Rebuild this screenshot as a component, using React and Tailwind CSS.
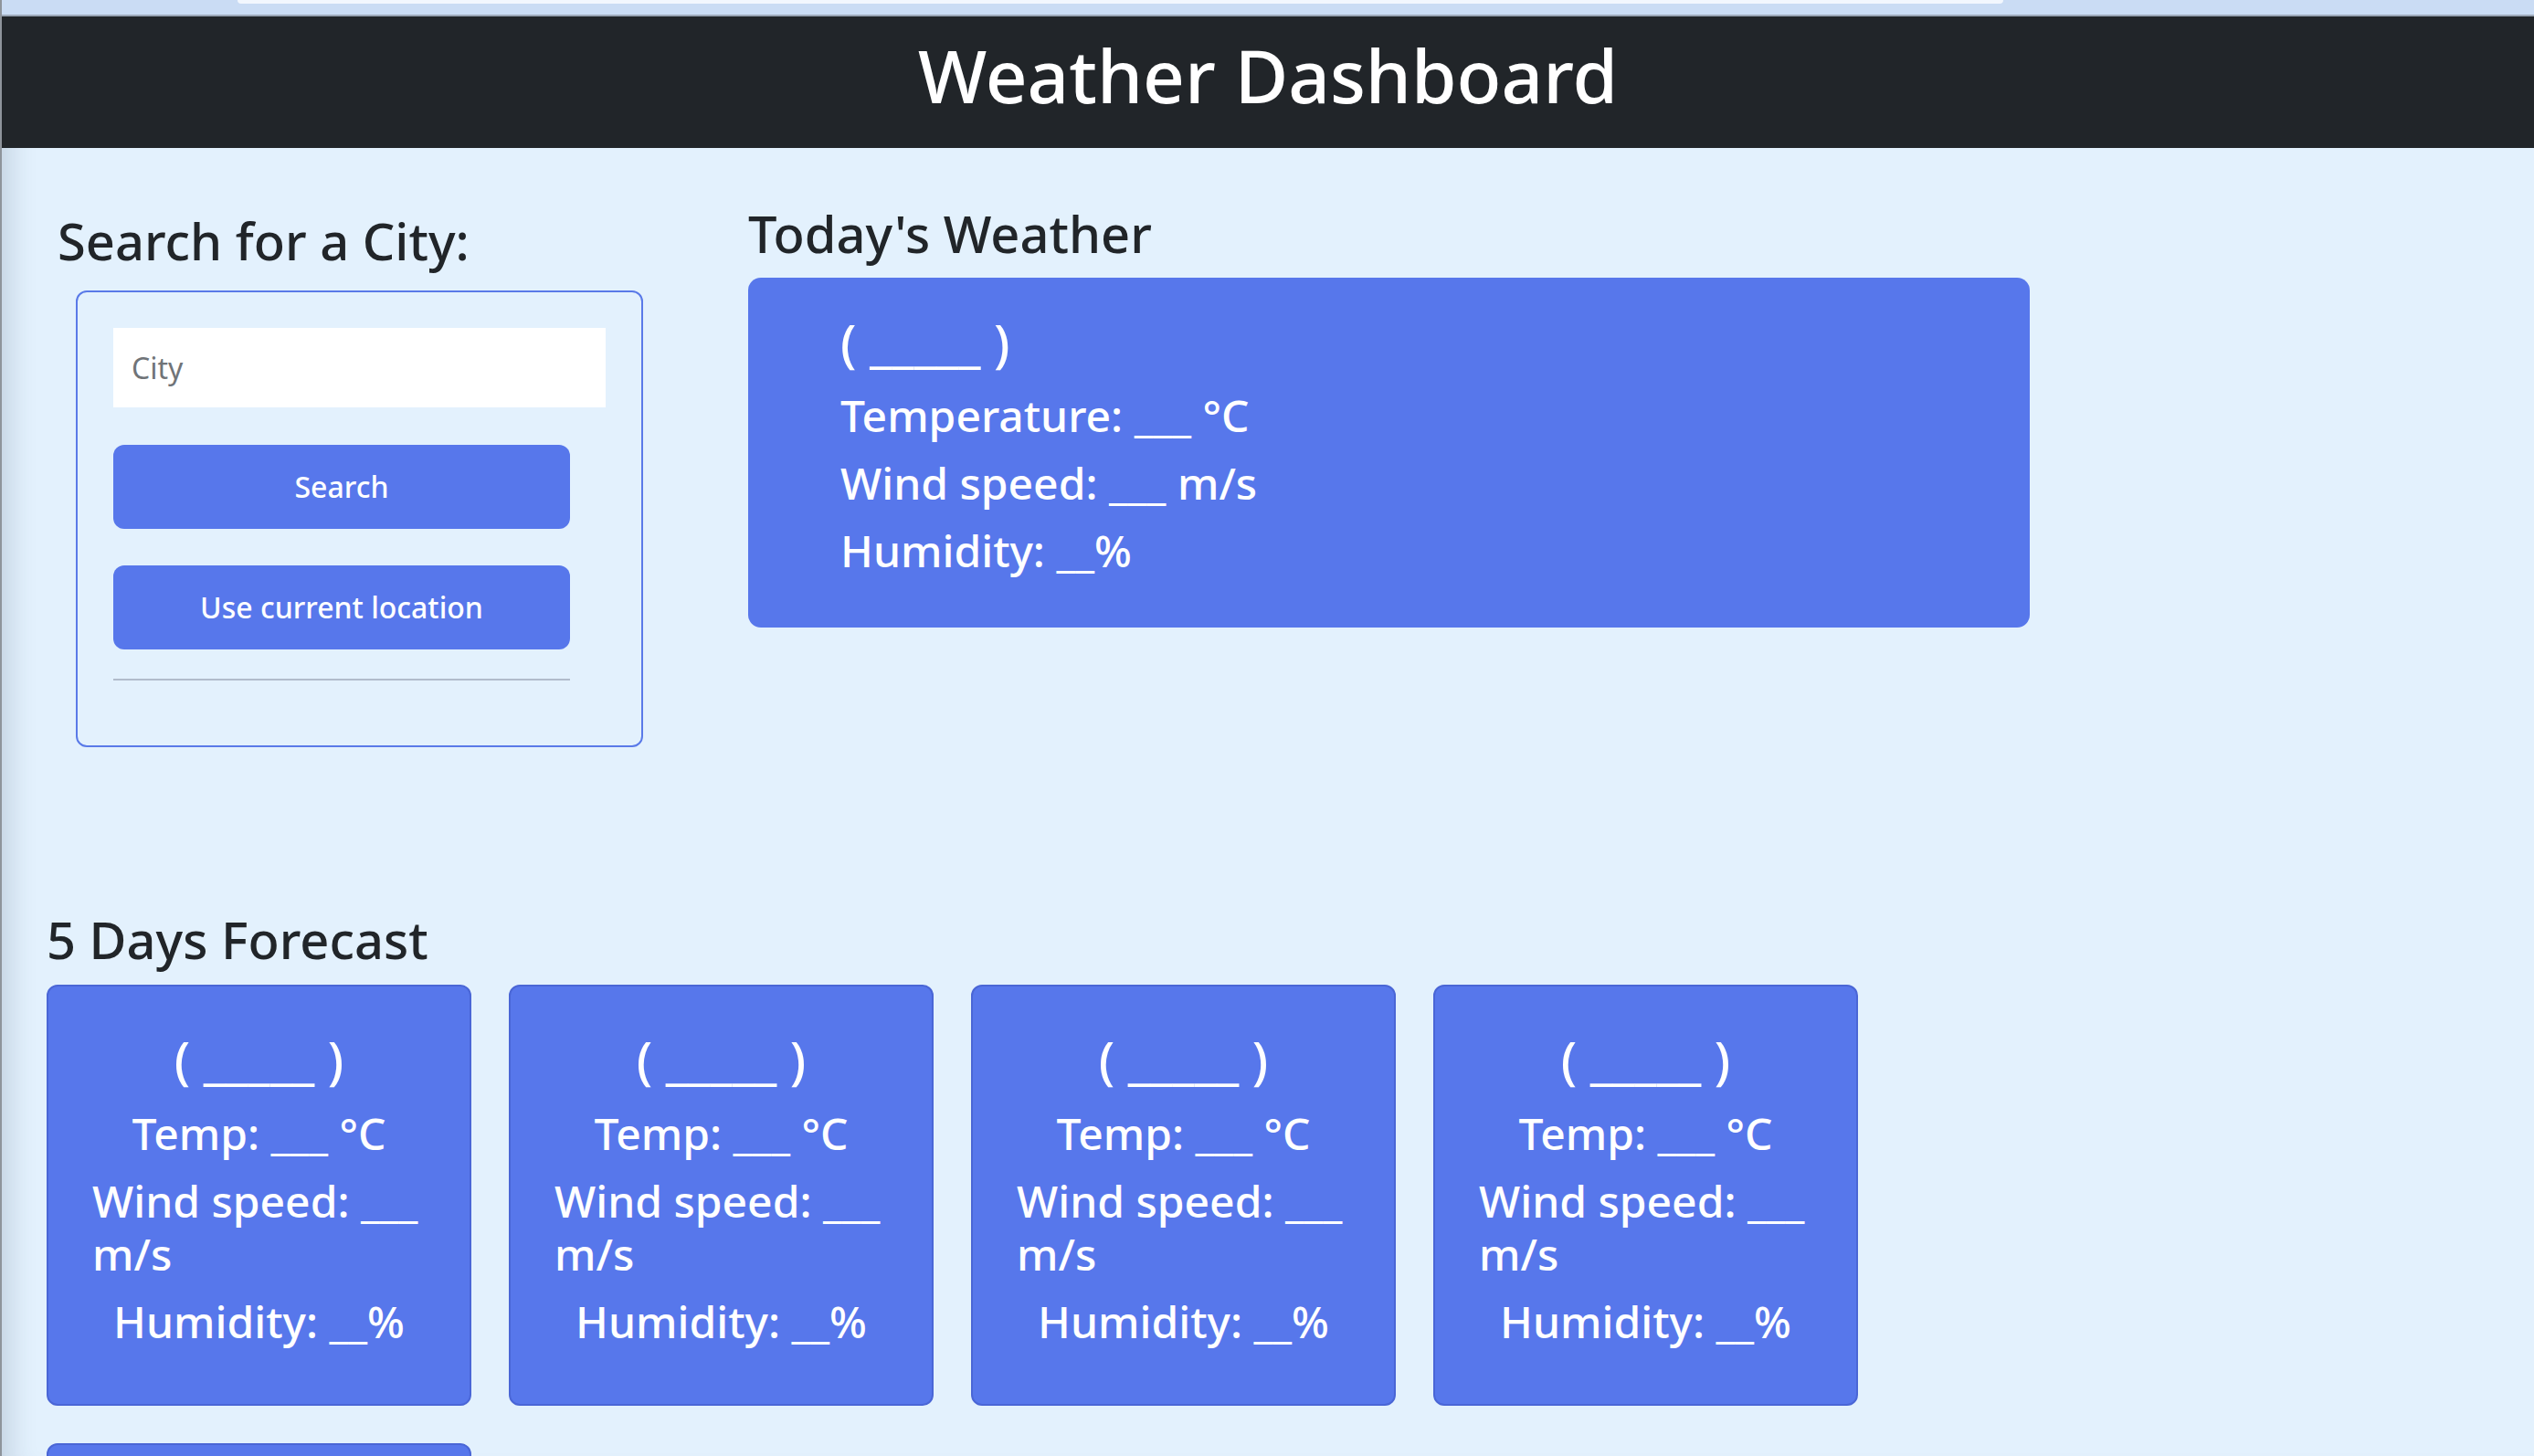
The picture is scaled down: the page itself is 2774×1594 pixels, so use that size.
import { useState } from "react";

const forecastDays = [1, 2, 3, 4, 5];

function ForecastCard() {
  return (
    <div className="w-[465px] h-[461px] border-2 border-[#4a66d6] rounded-[12px] bg-[#5777eb] text-white px-[48px] pt-[46px] flex flex-col items-center">
      <p className="text-[56px] leading-[67.2px] mb-[18px]">( _____ )</p>
      <p className="text-[48px] leading-[58px] mb-[16px]">Temp: ___ °C</p>
      <p className="text-[48px] leading-[58px] mb-[16px]">Wind speed: ___ m/s</p>
      <p className="text-[48px] leading-[58px]">Humidity: __%</p>
    </div>
  );
}

export default function App() {
  const [city, setCity] = useState("");

  return (
    <div className="h-[1594px] w-full overflow-hidden bg-[#e3f1fd] font-['Noto_Sans',sans-serif] font-medium text-[#212529] shadow-[inset_34px_0_30px_-26px_rgba(40,60,90,0.18)] border-l-2 border-[#8e949b]">
      {/* browser strip */}
      <div className="h-[16px] bg-[#cadcf4] flex">
        <div className="ml-[258px] w-[1933px] h-[4px] bg-[#f2f7fe] rounded-b-[6px]"></div>
      </div>
      <div className="h-[2px] bg-[#9aa6b6]"></div>

      {/* Header */}
      <header className="h-[144px] bg-[#212529] flex justify-center pt-[24px]">
        <h1 className="text-[80px] leading-[80px] text-white">Weather Dashboard</h1>
      </header>

      <main>
        <div className="flex items-start">
          {/* Search column */}
          <section className="ml-[61px] w-[641px] pt-[68px]">
            <h3 className="text-[56px] leading-[67.2px] mb-[21px]">Search for a City:</h3>
            <div className="ml-[20px] w-[621px] h-[500px] border-2 border-[#5a7ae8] rounded-[12px] pt-[39px] pl-[39px]">
              <input
                value={city}
                onChange={(e) => setCity(e.target.value)}
                placeholder="City"
                className="block w-[539px] h-[87px] bg-white px-[20px] text-[32px] font-normal text-[#212529] placeholder:text-[#707478] outline-none"
              />
              <button className="block mt-[41px] w-[500px] h-[92px] rounded-[12px] bg-[#5777eb] text-white text-[32px]">
                Search
              </button>
              <button className="block mt-[40px] w-[500px] h-[92px] rounded-[12px] bg-[#5777eb] text-white text-[32px]">
                Use current location
              </button>
              <div className="mt-[32px] w-[500px] h-[2px] bg-[#b1bccb]"></div>
            </div>
          </section>

          {/* Today's weather */}
          <section className="ml-[115px] pt-[60px]">
            <h3 className="text-[56px] leading-[67.2px] mb-[15px]">Today's Weather</h3>
            <div className="w-[1403px] h-[383px] rounded-[14px] bg-[#5777eb] text-white pl-[101px] pt-[37px]">
              <p className="text-[56px] leading-[67.2px] mb-[18px]">( _____ )</p>
              <p className="text-[48px] leading-[58px] mb-[16px]">Temperature: ___ °C</p>
              <p className="text-[48px] leading-[58px] mb-[16px]">Wind speed: ___ m/s</p>
              <p className="text-[48px] leading-[58px]">Humidity: __%</p>
            </div>
          </section>
        </div>

        {/* Forecast */}
        <section className="ml-[49px] mt-[177px]">
          <h3 className="text-[56px] leading-[67.2px] mb-[16px]">5 Days Forecast</h3>
          <div className="w-[2000px] flex flex-wrap gap-x-[41px] gap-y-[41px]">
            {forecastDays.map((d) => (
              <ForecastCard key={d} />
            ))}
          </div>
        </section>
      </main>
    </div>
  );
}
